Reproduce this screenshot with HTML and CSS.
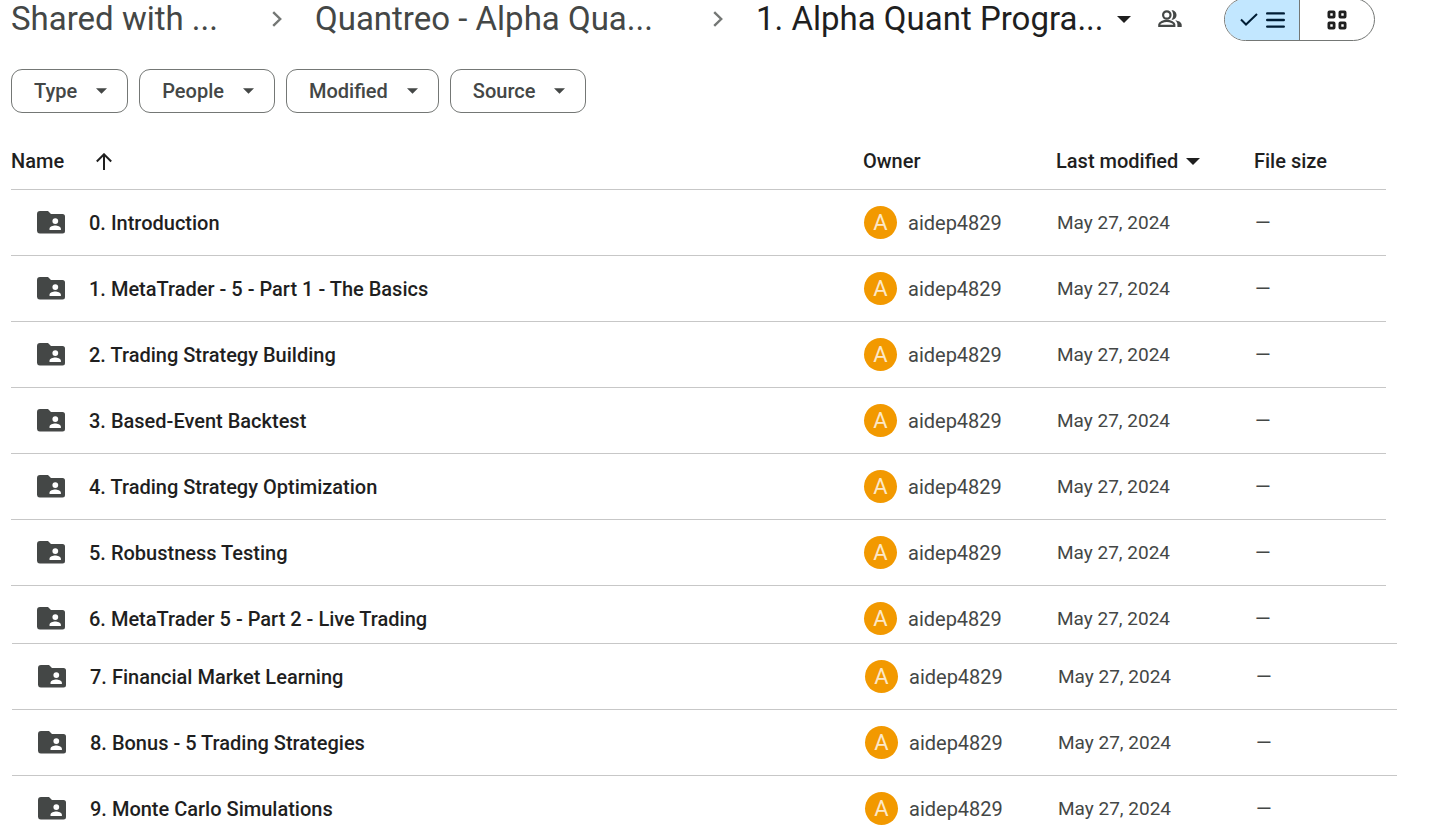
FILE: index.html
```
<!DOCTYPE html>
<html lang="en">
<head>
<meta charset="utf-8">
<meta name="viewport" content="width=device-width, initial-scale=1">
<title>1. Alpha Quant Program</title>
<link rel="stylesheet" href="styles.css">
</head>
<body>
<svg class="sprite" aria-hidden="true">
  <symbol id="folder" viewBox="0 0 28 23"><path fill="currentColor" fill-rule="evenodd" d="M3 0h8l3 3h11.500a2.500 2.500 0 0 1 2.500 2.500V20a2.500 2.500 0 0 1-2.500 2.500H2.800A2.800 2.800 0 0 1 0 20V3a3 3 0 0 1 3-3ZM18.300 7.200a2.900 2.900 0 1 0 0 5.800 2.900 2.900 0 0 0 0-5.800ZM12.500 19h11.400v-1.300c0-2.100-3.600-3.200-5.700-3.200s-5.700 1.100-5.700 3.200Z"/></symbol>
  <symbol id="caret" viewBox="0 0 14 7"><path fill="currentColor" d="M0 0h14L7 7Z"/></symbol>
  <symbol id="chevron" viewBox="0 0 10 16"><path fill="none" stroke="currentColor" stroke-width="2.400" d="m1.200 1.200 7 6.800-7 6.800"/></symbol>
</svg>
<header class="topbar">
  <nav class="crumbs" aria-label="Folder path">
    <a class="crumb crumb-root" href="#">Shared with ...</a>
    <svg class="chevron"><use href="#chevron"/></svg>
    <a class="crumb crumb-parent" href="#">Quantreo - Alpha Qua...</a>
    <svg class="chevron"><use href="#chevron"/></svg>
    <button class="crumb crumb-current" type="button">1. Alpha Quant Progra...<svg class="caret"><use href="#caret"/></svg></button>
  </nav>
  <button class="people" type="button" aria-label="Manage access">
    <svg viewBox="0 0 24 18" width="24" height="18"><g fill="none" stroke="currentColor" stroke-width="2.200"><circle cx="8.800" cy="5" r="3.700"/><path d="M1.300 15.900v-1.300c0-2 4.300-3.700 7.500-3.700s7.500 1.700 7.500 3.700v1.300Z"/></g><path fill="currentColor" d="M13.500.2c3 0 5 2.100 5 4.800s-2 4.800-5 4.800c1.100-1.300 1.700-2.900 1.700-4.800S14.600 1.500 13.500.2ZM17.300 10.200c3.400.7 6.400 2.100 6.400 4.500V17h-4.300v-2.500c0-1.700-.8-3.200-2.100-4.300Z"/></svg>
  </button>
  <div class="toggle" role="group" aria-label="Layout">
    <button class="view view-on" type="button" aria-pressed="true" aria-label="List layout">
      <svg viewBox="0 0 18 13" width="18" height="13"><path fill="none" stroke="currentColor" stroke-width="2" d="m1 6.500 5 5L17 1"/></svg>
      <svg viewBox="0 0 19 16" width="19" height="16"><path fill="none" stroke="currentColor" stroke-width="2.400" stroke-linecap="round" d="M1.200 1.400h16.600M1.200 8h16.600M1.200 14.600h16.600"/></svg>
    </button>
    <button class="view" type="button" aria-pressed="false" aria-label="Grid layout">
      <svg viewBox="0 0 20 20" width="20" height="20"><g fill="none" stroke="currentColor" stroke-width="2.800"><rect x="1.900" y="1.900" width="5.200" height="5.200" rx=".5"/><rect x="12.900" y="1.900" width="5.200" height="5.200" rx=".5"/><rect x="1.900" y="12.900" width="5.200" height="5.200" rx=".5"/><rect x="12.900" y="12.900" width="5.200" height="5.200" rx=".5"/></g></svg>
    </button>
  </div>
</header>
<div class="filters">
  <button class="chip" type="button" aria-haspopup="menu">Type<svg class="caret caret-small"><use href="#caret"/></svg></button>
  <button class="chip" type="button" aria-haspopup="menu">People<svg class="caret caret-small"><use href="#caret"/></svg></button>
  <button class="chip" type="button" aria-haspopup="menu">Modified<svg class="caret caret-small"><use href="#caret"/></svg></button>
  <button class="chip" type="button" aria-haspopup="menu">Source<svg class="caret caret-small"><use href="#caret"/></svg></button>
</div>
<main>
<table class="files">
  <colgroup><col><col class="col-owner"><col class="col-date"><col class="col-size"></colgroup>
  <thead><tr>
    <th scope="col"><span class="label">Name<svg class="arrow" viewBox="0 0 16 17"><path fill="none" stroke="currentColor" stroke-width="2" d="M8 17V1.500M.8 8.500 8 1.300l7.200 7.200"/></svg></span></th>
    <th scope="col">Owner</th>
    <th scope="col"><button class="sort" type="button">Last modified<svg class="caret"><use href="#caret"/></svg></button></th>
    <th scope="col">File size</th>
  </tr></thead>
  <tbody>
  <tr><td><a class="file" href="#"><svg class="folder"><use href="#folder"/></svg>0. Introduction</a></td><td><span class="owner"><span class="avatar">A</span>aidep4829</span></td><td class="date">May 27, 2024</td><td>—</td></tr>
  <tr><td><a class="file" href="#"><svg class="folder"><use href="#folder"/></svg>1. MetaTrader - 5 - Part 1 - The Basics</a></td><td><span class="owner"><span class="avatar">A</span>aidep4829</span></td><td class="date">May 27, 2024</td><td>—</td></tr>
  <tr><td><a class="file" href="#"><svg class="folder"><use href="#folder"/></svg>2. Trading Strategy Building</a></td><td><span class="owner"><span class="avatar">A</span>aidep4829</span></td><td class="date">May 27, 2024</td><td>—</td></tr>
  <tr><td><a class="file" href="#"><svg class="folder"><use href="#folder"/></svg>3. Based-Event Backtest</a></td><td><span class="owner"><span class="avatar">A</span>aidep4829</span></td><td class="date">May 27, 2024</td><td>—</td></tr>
  <tr><td><a class="file" href="#"><svg class="folder"><use href="#folder"/></svg>4. Trading Strategy Optimization</a></td><td><span class="owner"><span class="avatar">A</span>aidep4829</span></td><td class="date">May 27, 2024</td><td>—</td></tr>
  <tr><td><a class="file" href="#"><svg class="folder"><use href="#folder"/></svg>5. Robustness Testing</a></td><td><span class="owner"><span class="avatar">A</span>aidep4829</span></td><td class="date">May 27, 2024</td><td>—</td></tr>
  <tr><td><a class="file" href="#"><svg class="folder"><use href="#folder"/></svg>6. MetaTrader 5 - Part 2 - Live Trading</a></td><td><span class="owner"><span class="avatar">A</span>aidep4829</span></td><td class="date">May 27, 2024</td><td>—</td></tr>
  </tbody>
</table>
<table class="files files-more" aria-label="More folders">
  <colgroup><col><col class="col-owner"><col class="col-date"><col class="col-size"></colgroup>
  <tbody>
  <tr><td><a class="file" href="#"><svg class="folder"><use href="#folder"/></svg>7. Financial Market Learning</a></td><td><span class="owner"><span class="avatar">A</span>aidep4829</span></td><td class="date">May 27, 2024</td><td>—</td></tr>
  <tr><td><a class="file" href="#"><svg class="folder"><use href="#folder"/></svg>8. Bonus - 5 Trading Strategies</a></td><td><span class="owner"><span class="avatar">A</span>aidep4829</span></td><td class="date">May 27, 2024</td><td>—</td></tr>
  <tr><td><a class="file" href="#"><svg class="folder"><use href="#folder"/></svg>9. Monte Carlo Simulations</a></td><td><span class="owner"><span class="avatar">A</span>aidep4829</span></td><td class="date">May 27, 2024</td><td>—</td></tr>
  </tbody>
</table>
</main>
</body>
</html>
```
FILE: styles.css
```
* { box-sizing: border-box; }
body { margin: 0; background: #fff; color: #1f1f1f; font: 20px/24px Roboto, sans-serif; }
button { margin: 0; padding: 0; border: 0; background: none; color: inherit; font: inherit; cursor: pointer; }
a { color: inherit; text-decoration: none; }
svg { display: block; flex: none; }
.sprite { position: absolute; width: 0; height: 0; }

.topbar { display: flex; align-items: center; height: 41px; padding-left: 11px; }
.crumbs { display: flex; align-items: center; height: 38px; margin-bottom: 3px; font-size: 33px; line-height: 38px; color: #444746; white-space: nowrap; }
.crumb-root { width: 261px; }
.crumb-parent { width: 398px; }
.crumb-root + .chevron, .crumb-parent + .chevron { margin-right: 33px; }
.chevron { width: 10px; height: 16px; color: #747775; }
.crumb-current { display: flex; align-items: center; justify-content: space-between; width: 375px; color: #1f1f1f; }
.caret { width: 14px; height: 7px; }
.people { margin-left: 27px; margin-bottom: 3px; color: #444746; }
.toggle { display: flex; width: 151px; height: 43px; margin: -2px 0 0 42px; border: 1px solid #747775; border-radius: 22px; overflow: hidden; }
.view { display: flex; flex: 1; align-items: center; justify-content: center; gap: 8px; }
.view-on { border-right: 1px solid #747775; background: #c2e7ff; color: #001d35; }

.filters { display: flex; flex-wrap: wrap; gap: 11px; padding: 28px 11px 0; }
.chip { display: flex; align-items: center; gap: 19px; height: 44px; padding: 0 20px 0 22px; border: 1px solid #747775; border-radius: 11px; color: #444746; font-weight: 500; }
.caret-small { width: 11px; height: 6px; }

.files { width: calc(100% - 58px); margin-left: 11px; border-collapse: separate; border-spacing: 0; table-layout: fixed; }
.files-more { width: calc(100% - 48px); margin-left: 12px; border-top: 1px solid #c7c7c7; }
.col-owner { width: 193px; }
.col-date { width: 198px; }
.col-size { width: 132px; }
.files-more .col-size { width: 142px; }
th { height: 77px; padding: 20px 0 0; border-bottom: 1px solid #c7c7c7; font-weight: 500; text-align: left; }
.label { display: flex; align-items: center; gap: 32px; }
.arrow { width: 16px; height: 17px; }
.sort { display: flex; align-items: center; gap: 8px; }
td { height: 66px; padding: 16px 1px; border-bottom: 1px solid #c7c7c7; color: #444746; }
tr:last-child td { height: 57px; padding-bottom: 8px; border-bottom: 0; }
.date { font-size: 19px; }
.file { display: flex; align-items: center; gap: 24px; padding-left: 25px; color: #1f1f1f; font-weight: 500; }
.folder { width: 28px; height: 23px; color: #444746; }
.owner { display: flex; align-items: center; gap: 11px; }
.avatar { width: 33px; height: 33px; border-radius: 50%; background: #f29900; color: #fce8c8; font-size: 22px; line-height: 33px; text-align: center; }
```
